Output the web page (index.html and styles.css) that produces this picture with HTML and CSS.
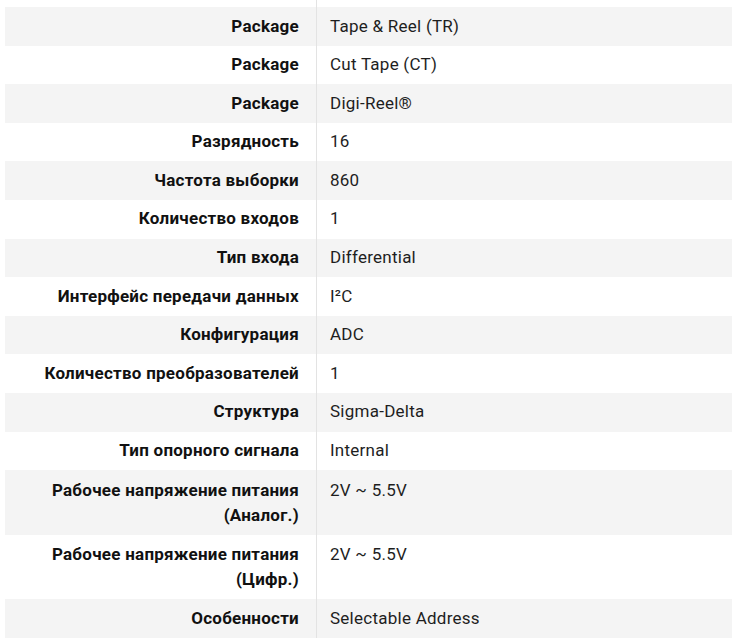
FILE: index.html
```html
<!DOCTYPE html>
<html lang="ru">
<head>
<meta charset="utf-8">
<title>Specs</title>
<link rel="stylesheet" href="styles.css">
</head>
<body>
<table class="specs">
  <tbody>
    <tr class="spacer"><th></th><td></td></tr>
    <tr class="odd"><th>Package</th><td>Tape &amp; Reel (TR)</td></tr>
    <tr><th>Package</th><td>Cut Tape (CT)</td></tr>
    <tr class="odd"><th>Package</th><td>Digi-Reel®</td></tr>
    <tr><th>Разрядность</th><td>16</td></tr>
    <tr class="odd"><th>Частота выборки</th><td>860</td></tr>
    <tr><th>Количество входов</th><td>1</td></tr>
    <tr class="odd"><th>Тип входа</th><td>Differential</td></tr>
    <tr><th>Интерфейс передачи данных</th><td>I²C</td></tr>
    <tr class="odd"><th>Конфигурация</th><td>ADC</td></tr>
    <tr><th>Количество преобразователей</th><td>1</td></tr>
    <tr class="odd"><th>Структура</th><td>Sigma-Delta</td></tr>
    <tr><th>Тип опорного сигнала</th><td>Internal</td></tr>
    <tr class="odd tall"><th>Рабочее напряжение питания<br>(Аналог.)</th><td>2V ~ 5.5V</td></tr>
    <tr class="tall"><th>Рабочее напряжение питания<br>(Цифр.)</th><td>2V ~ 5.5V</td></tr>
    <tr class="odd"><th>Особенности</th><td>Selectable Address</td></tr>
  </tbody>
</table>
</body>
</html>
```
FILE: styles.css
```css
html, body {
  margin: 0;
  padding: 0;
  background: #fff;
}
body {
  font-family: Roboto, "Liberation Sans", sans-serif;
  font-size: 17px;
  letter-spacing: 0.25px;
  color: #1a1a1a;
}
.specs {
  margin-left: 5px;
  width: 727px;
  border-collapse: collapse;
  border-spacing: 0;
}
.specs th,
.specs td {
  line-height: 25.6px;
  padding-top: 6.5px;
  padding-bottom: 6.5px;
  vertical-align: top;
}
.specs tr.tall th,
.specs tr.tall td {
  line-height: 25px;
  padding-top: 7.5px;
  padding-bottom: 7px;
}
.specs th {
  width: 294px;
  padding-left: 0;
  padding-right: 17px;
  text-align: right;
  font-weight: 700;
  color: #111;
}
.specs td {
  padding-left: 13px;
  padding-right: 0;
  border-left: 1px solid #e3e3e3;
  font-weight: 400;
  color: #1e1e1e;
}
.specs .spacer th,
.specs .spacer td {
  height: 7px;
  padding-top: 0;
  padding-bottom: 0;
  line-height: 0;
}
.specs tr.odd {
  background: #f4f4f4;
}
```
